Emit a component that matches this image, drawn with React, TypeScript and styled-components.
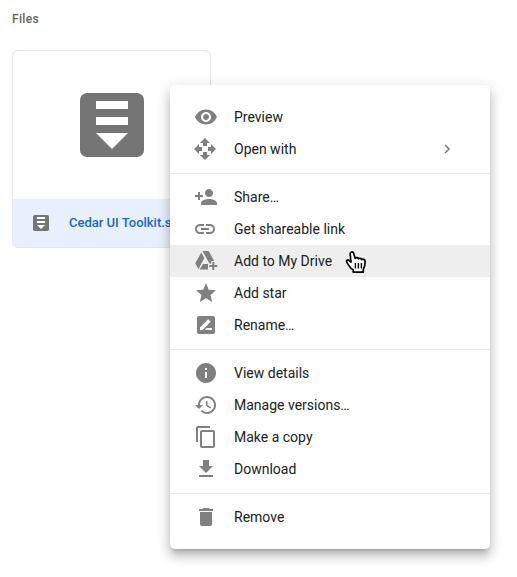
import React from "react";
import styled, { createGlobalStyle } from "styled-components";

const GlobalStyle = createGlobalStyle`
  * { box-sizing: border-box; }
  body { margin: 0; background: #fff; font-family: Roboto, "Liberation Sans", sans-serif; overflow: hidden; }
`;

const Page = styled.main`
  position: relative;
  width: 517px;
  height: 577px;
  padding: 12px 12px;
  overflow: hidden;
`;

const Heading = styled.h2`
  margin: 0 0 23px;
  font-size: 12px;
  line-height: 15px;
  font-weight: 500;
  letter-spacing: 0.35px;
  color: #5f6368;
`;

const Card = styled.article`
  display: flex;
  flex-direction: column;
  width: 199px;
  height: 198px;
  border: 1px solid #e4e5e8;
  border-radius: 6px;
  overflow: hidden;
`;

const Thumbnail = styled.div`
  flex: 1;
  display: flex;
  align-items: center;
  justify-content: center;
`;

const CardFooter = styled.footer`
  display: flex;
  align-items: center;
  height: 48px;
  padding-left: 20px;
  gap: 20px;
  background: #e8f0fe;
`;

const FileName = styled.span`
  padding-bottom: 2px;
  font-size: 13px;
  font-weight: 500;
  color: #1967d2;
  white-space: nowrap;
`;

const Menu = styled.div`
  position: absolute;
  left: 170px;
  top: 85px;
  width: 320px;
  padding: 16px 0;
  border-radius: 5px;
  background: #fff;
  box-shadow: 0 8px 10px 1px rgba(0, 0, 0, 0.14), 0 3px 14px 2px rgba(0, 0, 0, 0.12),
    0 5px 5px -3px rgba(0, 0, 0, 0.2);
`;

const MenuItem = styled.div<{ $active?: boolean }>`
  display: flex;
  align-items: center;
  height: 32px;
  padding: 0 31px 0 24px;
  background: ${(p) => (p.$active ? "#eee" : "transparent")};
`;

const MenuIcon = styled.svg<{ $shift?: number }>`
  width: 24px;
  height: 24px;
  flex: none;
  margin-left: ${(p) => p.$shift ?? 0}px;
  margin-right: ${(p) => 16 - (p.$shift ?? 0)}px;
  fill: #808080;
`;

const Label = styled.span`
  flex: 1;
  font-size: 14px;
  line-height: 20px;
  color: #202124;
`;

const Chevron = styled.svg`
  width: 24px;
  height: 24px;
  fill: none;
  stroke: #777;
  stroke-width: 1.5;
`;

const Divider = styled.hr`
  margin: 8px 0 7px;
  border: 0;
  height: 1px;
  background: #e5e5e5;
`;

const Cursor = styled.svg`
  position: absolute;
  left: 345px;
  top: 250px;
  width: 22px;
  height: 24px;
`;

type Entry = { label: string; path: string; shift?: number; active?: boolean; submenu?: boolean };

const groups: Entry[][] = [
  [
    { label: "Preview", path: "M12 4.5C7 4.5 2.73 7.61 1 12c1.73 4.39 6 7.5 11 7.5s9.27-3.11 11-7.5c-1.73-4.39-6-7.5-11-7.5zM12 17c-2.76 0-5-2.24-5-5s2.24-5 5-5 5 2.24 5 5-2.24 5-5 5zm0-8c-1.66 0-3 1.34-3 3s1.34 3 3 3 3-1.34 3-3-1.34-3-3-3z" },
    { label: "Open with", shift: -1, submenu: true, path: "M10 9h4V6h3l-5-5-5 5h3v3zm-1 1H6V7l-5 5 5 5v-3h3v-4zm14 2l-5-5v3h-3v4h3v3l5-5zm-9 3h-4v3H7l5 5 5-5h-3v-3z" },
  ],
  [
    { label: "Share…", path: "M15 12c2.21 0 4-1.79 4-4s-1.79-4-4-4-4 1.79-4 4 1.79 4 4 4zm-9-2V7H4v3H1v2h3v3h2v-3h3v-2H6zm9 4c-2.67 0-8 1.34-8 4v2h16v-2c0-2.66-5.33-4-8-4z" },
    { label: "Get shareable link", shift: -1, path: "M3.9 12c0-1.71 1.39-3.1 3.1-3.1h4V7H7c-2.76 0-5 2.24-5 5s2.24 5 5 5h4v-1.9H7c-1.71 0-3.1-1.39-3.1-3.1zM8 13h8v-2H8v2zm9-6h-4v1.9h4c1.71 0 3.1 1.39 3.1 3.1s-1.39 3.1-3.1 3.1h-4V17h4c2.76 0 5-2.24 5-5s-2.24-5-5-5z" },
    { label: "Add to My Drive", active: true, path: "M7.3 3.5L1.2 14.3l3.2 6L10.3 9zM8.5 2h6.2l5.5 10h-3v2.4h-1.8zM9 15h5v5.5H5.7zM18.3 13h2v3h3v2h-3v3h-2v-3h-3v-2h3z" },
    { label: "Add star", path: "M12 17.27L18.18 21l-1.64-7.03L22 9.24l-7.19-.61L12 2 9.19 8.63 2 9.24l5.46 4.73L5.82 21z" },
    { label: "Rename…", path: "M19 3H5c-1.1 0-2 .9-2 2v14c0 1.1.9 2 2 2h14c1.1 0 2-.9 2-2V5c0-1.1-.9-2-2-2zM6 17v-2.5l7.9-7.9c.2-.2.5-.2.7 0l1.8 1.8c.2.2.2.5 0 .7L8.5 17H6zm12 0h-7.5l2-2H18v2z" },
  ],
  [
    { label: "View details", path: "M12 2C6.48 2 2 6.48 2 12s4.48 10 10 10 10-4.48 10-10S17.52 2 12 2zm1 15h-2v-6h2v6zm0-8h-2V7h2v2z" },
    { label: "Manage versions…", path: "M13 3c-4.97 0-9 4.03-9 9H1l3.89 3.89.07.14L9 12H6c0-3.87 3.13-7 7-7s7 3.13 7 7-3.13 7-7 7c-1.93 0-3.68-.79-4.94-2.06l-1.42 1.42C8.27 19.99 10.51 21 13 21c4.97 0 9-4.03 9-9s-4.03-9-9-9zm-1 5v5l4.28 2.54.72-1.21-3.5-2.08V8H12z" },
    { label: "Make a copy", path: "M16 1H4c-1.1 0-2 .9-2 2v14h2V3h12V1zm3 4H8c-1.1 0-2 .9-2 2v14c0 1.1.9 2 2 2h11c1.1 0 2-.9 2-2V7c0-1.1-.9-2-2-2zm0 16H8V7h11v14z" },
    { label: "Download", path: "M19 9h-4V3H9v6H5l7 7 7-7zM5 18v2h14v-2H5z" },
  ],
  [{ label: "Remove", path: "M6 19c0 1.1.9 2 2 2h8c1.1 0 2-.9 2-2V7H6v12zM19 4h-3.5l-1-1h-5l-1 1H5v2h14V4z" }],
];

const ArchiveIcon = ({ size }: { size: number }) => (
  <svg width={size} height={size} viewBox="0 0 64 64">
    <rect width="64" height="64" rx="7" fill="#757575" />
    <path d="M16 8h32v8H16zM16 24h32v8H16zM16 40h32L32 56z" fill="#fff" />
  </svg>
);

export default function App() {
  return (
    <Page>
      <GlobalStyle />
      <Heading>Files</Heading>
      <Card>
        <Thumbnail><ArchiveIcon size={64} /></Thumbnail>
        <CardFooter>
          <ArchiveIcon size={16} />
          <FileName>Cedar UI Toolkit.sketch</FileName>
        </CardFooter>
      </Card>
      <Menu role="menu">
        {groups.map((group, i) => (
          <React.Fragment key={i}>
            {i > 0 && <Divider />}
            {group.map((item) => (
              <MenuItem key={item.label} role="menuitem" $active={item.active}>
                <MenuIcon viewBox="0 0 24 24" $shift={item.shift}><path d={item.path} /></MenuIcon>
                <Label>{item.label}</Label>
                {item.submenu && <Chevron viewBox="0 0 24 24"><path d="M10 8l4 4-4 4" /></Chevron>}
              </MenuItem>
            ))}
          </React.Fragment>
        ))}
      </Menu>
      <Cursor viewBox="0 0 22 24">
        <path
          d="M6 12.2L5.2 4.4C4.8 1.6 8 1 8.7 3.5l1.5 5c.8-1.2 3-1 3.3.3 1-1 2.9-.5 3.1.8 1.2-.8 3.4-.3 3.5 1.6.1 3.4-.3 5.6-1.8 8v2.9H8.2v-2.4c-1.8-.6-3.5-2.7-4.6-4.6L1.9 12.4c-1-1.9.9-3.3 2.3-1.8z"
          fill="#fff" stroke="#000" strokeWidth="1.7" strokeLinejoin="round"
        />
        <path d="M10.4 13v5.5M13.4 13v5.5M16.4 13v5.5" stroke="#000" strokeWidth="1.4" />
      </Cursor>
    </Page>
  );
}
